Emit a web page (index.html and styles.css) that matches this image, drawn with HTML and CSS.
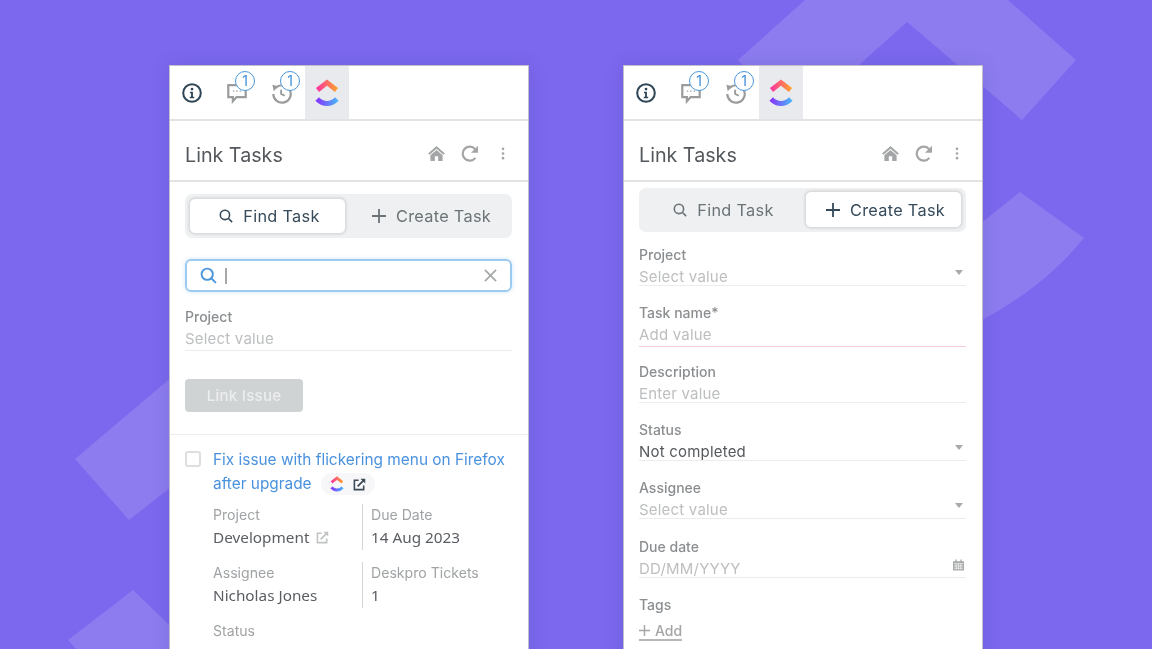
FILE: index.html
```html
<!DOCTYPE html>
<html lang="en">
<head>
    <meta charset="UTF-8">
    <meta name="viewport" content="width=device-width, initial-scale=1.0">
    <title>Link Tasks</title>
    <link rel="stylesheet" href="styles.css">
</head>
<body>
    <!-- Backdrop shapes -->
    <svg class="backdrop" width="1152" height="649" viewBox="0 0 1152 649">
        <path d="M738 60 805 0H1008L1076 60 1022 120 907 22 860 64 800 120 760 84Z"/>
        <path d="M1020 192 1084 238C1058 270 1020 302 970 326L960 240Z"/>
        <path d="M75 459 180 370V480L129 520Z"/>
        <path d="M68 640 133 590 190 645V649H76Z"/>
    </svg>

    <!-- Shared icons -->
    <svg class="sprite" width="0" height="0">
        <defs>
            <linearGradient id="logo-top" gradientUnits="userSpaceOnUse" x1="1" y1="0" x2="23" y2="0">
                <stop offset="0" stop-color="#fb2fa5"/>
                <stop offset="1" stop-color="#ffa62b"/>
            </linearGradient>
            <linearGradient id="logo-bottom" gradientUnits="userSpaceOnUse" x1="1" y1="0" x2="23" y2="0">
                <stop offset="0" stop-color="#8930fd"/>
                <stop offset="1" stop-color="#49b8f9"/>
            </linearGradient>
        </defs>
        <symbol id="i-logo" viewBox="0 0 24 28">
            <path d="M2.500 11 12 3.600 21.500 11" fill="none" stroke="url(#logo-top)" stroke-width="5"/>
            <path d="M2.200 20C8 26 16 26 21.800 20" fill="none" stroke="url(#logo-bottom)" stroke-width="5"/>
        </symbol>
        <symbol id="i-info" viewBox="0 0 24 24">
            <circle cx="12" cy="12" r="9.600" fill="none" stroke="currentColor" stroke-width="2.200"/>
            <circle cx="12" cy="7.700" r="1.500" fill="currentColor"/>
            <path d="M9.800 10.600H13V16H14.400V17.600H9.600V16H11V12.200H9.800Z" fill="currentColor"/>
        </symbol>
        <symbol id="i-chat" viewBox="0 0 24 24">
            <path d="M2.500 3.500H21.500V16.500H11.500L7.500 21V16.500H2.500Z" fill="none" stroke="currentColor" stroke-width="2.400"/>
            <path d="M7.500 10H9M11.200 10H12.700M14.900 10H16.400" stroke="currentColor" stroke-width="1.500"/>
        </symbol>
        <symbol id="i-history" viewBox="0 0 24 24">
            <path d="M5.300 6.300A9.500 9.500 0 1 1 2.500 13" fill="none" stroke="currentColor" stroke-width="2.400"/>
            <path d="M1.500 3 8 4.500 3 10Z" fill="currentColor"/>
            <path d="M11 8.500V13L15 15" fill="none" stroke="currentColor" stroke-width="2"/>
        </symbol>
        <symbol id="i-home" viewBox="0 0 18 16">
            <path d="M9 0 18 8 16.300 9.200 9 3 1.700 9.200 0 8Z" fill="currentColor"/>
            <path d="M9 4.300 15.500 9.800V16H10.800V11H7.200V16H2.500V9.800Z" fill="currentColor"/>
        </symbol>
        <symbol id="i-refresh" viewBox="0 0 18 18">
            <path d="M14.300 12.800A7 7 0 1 1 14.100 4.200" fill="none" stroke="currentColor" stroke-width="2.200"/>
            <path d="M17 .8V7.800H10Z" fill="currentColor"/>
        </symbol>
        <symbol id="i-dots" viewBox="0 0 4 14">
            <circle cx="2" cy="2" r="1.400" fill="currentColor"/>
            <circle cx="2" cy="7" r="1.400" fill="currentColor"/>
            <circle cx="2" cy="12" r="1.400" fill="currentColor"/>
        </symbol>
        <symbol id="i-search" viewBox="0 0 16 16">
            <circle cx="6.800" cy="6.800" r="5.300" fill="none" stroke="currentColor" stroke-width="1.800"/>
            <path d="M10.800 10.800 15 15" stroke="currentColor" stroke-width="1.800"/>
        </symbol>
        <symbol id="i-plus" viewBox="0 0 14 14">
            <path d="M7 0V14M0 7H14" stroke="currentColor" stroke-width="1.800"/>
        </symbol>
        <symbol id="i-close" viewBox="0 0 14 14">
            <path d="M1 1 13 13M13 1 1 13" stroke="currentColor" stroke-width="1.800"/>
        </symbol>
        <symbol id="i-external" viewBox="0 0 14 14">
            <path d="M6 2.500H1.500V12.500H11.500V8" fill="none" stroke="currentColor" stroke-width="1.700"/>
            <path d="M5 9 12 2" stroke="currentColor" stroke-width="1.900"/>
            <path d="M8 .8H13.200V6Z" fill="currentColor"/>
        </symbol>
        <symbol id="i-calendar" viewBox="0 0 12 12">
            <path d="M0 2H12V12H0ZM2.500 0H4V2H2.500ZM8 0H9.500V2H8Z" fill="currentColor"/>
            <path d="M1 4.500H11M1 7H11M1 9.500H11M3.500 4.500V11M6 4.500V11M8.500 4.500V11" stroke="#fff" stroke-width=".7"/>
        </symbol>
    </svg>

    <main class="stage">
        <!-- Find task panel -->
        <section class="panel">
            <nav class="nav-bar">
                <a class="nav-tab nav-tab-info"><svg class="icon-22"><use href="#i-info"/></svg></a>
                <a class="nav-tab"><svg class="icon-22"><use href="#i-chat"/></svg><span class="badge">1</span></a>
                <a class="nav-tab"><svg class="icon-22"><use href="#i-history"/></svg><span class="badge">1</span></a>
                <a class="nav-tab nav-tab-active"><svg class="logo"><use href="#i-logo"/></svg></a>
            </nav>
            <header class="title-bar">
                <h1>Link Tasks</h1>
                <div class="title-actions">
                    <svg class="action-home"><use href="#i-home"/></svg>
                    <svg class="action-refresh"><use href="#i-refresh"/></svg>
                    <svg class="action-dots"><use href="#i-dots"/></svg>
                </div>
            </header>
            <div class="content">
                <div class="tabs tabs-find">
                    <button class="tab tab-active"><svg class="icon-14"><use href="#i-search"/></svg>Find Task</button>
                    <button class="tab"><svg class="icon-14"><use href="#i-plus"/></svg>Create Task</button>
                </div>
                <div class="search-box">
                    <svg class="search-icon"><use href="#i-search"/></svg>
                    <span class="caret"></span>
                    <svg class="search-clear"><use href="#i-close"/></svg>
                </div>
                <div class="field field-tall">
                    <label>Project</label>
                    <div class="value placeholder">Select value</div>
                </div>
                <button class="link-button">Link Issue</button>
            </div>
            <div class="result">
                <span class="checkbox"></span>
                <div class="result-body">
                    <a class="result-title">Fix issue with flickering menu on Firefox after upgrade<span class="result-pill"><svg class="pill-logo"><use href="#i-logo"/></svg><svg class="pill-link"><use href="#i-external"/></svg></span></a>
                    <div class="meta-grid">
                        <div class="meta">
                            <div class="meta-label">Project</div>
                            <div class="meta-value">Development<svg class="meta-link"><use href="#i-external"/></svg></div>
                        </div>
                        <div class="meta meta-right">
                            <div class="meta-label">Due Date</div>
                            <div class="meta-value">14 Aug 2023</div>
                        </div>
                        <div class="meta">
                            <div class="meta-label">Assignee</div>
                            <div class="meta-value">Nicholas Jones</div>
                        </div>
                        <div class="meta meta-right">
                            <div class="meta-label">Deskpro Tickets</div>
                            <div class="meta-value">1</div>
                        </div>
                        <div class="meta">
                            <div class="meta-label">Status</div>
                        </div>
                    </div>
                </div>
            </div>
        </section>

        <!-- Create task panel -->
        <section class="panel">
            <nav class="nav-bar">
                <a class="nav-tab nav-tab-info"><svg class="icon-22"><use href="#i-info"/></svg></a>
                <a class="nav-tab"><svg class="icon-22"><use href="#i-chat"/></svg><span class="badge">1</span></a>
                <a class="nav-tab"><svg class="icon-22"><use href="#i-history"/></svg><span class="badge">1</span></a>
                <a class="nav-tab nav-tab-active"><svg class="logo"><use href="#i-logo"/></svg></a>
            </nav>
            <header class="title-bar">
                <h1>Link Tasks</h1>
                <div class="title-actions">
                    <svg class="action-home"><use href="#i-home"/></svg>
                    <svg class="action-refresh"><use href="#i-refresh"/></svg>
                    <svg class="action-dots"><use href="#i-dots"/></svg>
                </div>
            </header>
            <div class="content content-create">
                <div class="tabs tabs-create">
                    <button class="tab"><svg class="icon-14"><use href="#i-search"/></svg>Find Task</button>
                    <button class="tab tab-active"><svg class="icon-14"><use href="#i-plus"/></svg>Create Task</button>
                </div>
                <div class="form">
                    <div class="field">
                        <label>Project</label>
                        <div class="value placeholder">Select value<span class="arrow"></span></div>
                    </div>
                    <div class="field field-tall">
                        <label>Task name*</label>
                        <div class="value placeholder value-error">Add value</div>
                    </div>
                    <div class="field">
                        <label>Description</label>
                        <div class="value placeholder">Enter value</div>
                    </div>
                    <div class="field">
                        <label>Status</label>
                        <div class="value">Not completed<span class="arrow"></span></div>
                    </div>
                    <div class="field">
                        <label>Assignee</label>
                        <div class="value placeholder">Select value<span class="arrow"></span></div>
                    </div>
                    <div class="field">
                        <label>Due date</label>
                        <div class="value placeholder">DD/MM/YYYY<svg class="calendar"><use href="#i-calendar"/></svg></div>
                    </div>
                    <div class="field">
                        <label>Tags</label>
                        <a class="add-tag"><svg class="icon-10"><use href="#i-plus"/></svg>Add</a>
                    </div>
                </div>
            </div>
        </section>
    </main>
</body>
</html>
```

FILE: styles.css
```css
/* General Page Styling */
html, body {
    height: 100%;
}

body {
    background-color: #7b68ee;
    font-family: Inter, Arial, sans-serif;
    margin: 0;
    overflow: hidden;
    position: relative;
}

.backdrop {
    position: absolute;
    left: 0;
    top: 0;
    fill: #8c7cf0;
}

.sprite {
    position: absolute;
}

.stage {
    display: flex;
    filter: blur(0.35px);
    gap: 94px;
    height: 649px;
    justify-content: center;
    overflow: hidden;
    padding-top: 65px;
    box-sizing: border-box;
    position: relative;
}

/* Panels */
.panel {
    background-color: #ffffff;
    border: 1px solid #bfbfc9;
    box-shadow: 0 0 18px rgba(60, 50, 120, 0.14);
    box-sizing: border-box;
    flex: none;
    height: 640px;
    width: 360px;
}

.nav-bar {
    border-bottom: 2px solid #e3e3e3;
    box-sizing: border-box;
    display: flex;
    height: 55px;
}

.nav-tab {
    align-items: center;
    color: #999b9c;
    display: flex;
    justify-content: center;
    position: relative;
    width: 45px;
}

.nav-tab-info {
    color: #2f4656;
    width: 44px;
}

.nav-tab-active {
    background-color: #e9eaed;
    margin-left: 1px;
    width: 44px;
}

.icon-22 {
    height: 22px;
    width: 22px;
}

.logo {
    height: 28px;
    width: 24px;
}

.badge {
    background-color: #ffffff;
    border: 1.5px solid #4c97dc;
    border-radius: 50%;
    box-sizing: border-box;
    color: #3f8fd8;
    font-size: 14px;
    height: 20px;
    line-height: 17px;
    position: absolute;
    right: 4px;
    text-align: center;
    top: 5px;
    width: 20px;
}

.title-bar {
    align-items: center;
    border-bottom: 2px solid #e3e3e3;
    box-sizing: border-box;
    display: flex;
    height: 61px;
    justify-content: space-between;
    padding: 8px 23px 0 15px;
}

h1 {
    color: #54585c;
    font-size: 19.7px;
    font-weight: 400;
    margin: 0;
}

.title-actions {
    align-items: center;
    color: #a3a5a6;
    display: flex;
    margin-top: -2px;
}

.action-home {
    height: 15px;
    margin-right: 16px;
    width: 17px;
}

.action-refresh {
    height: 18px;
    margin-right: 22px;
    width: 18px;
}

.action-dots {
    height: 13px;
    width: 4px;
}

/* Tabs */
.content {
    padding: 12px 16px 0 15px;
}

.content-create {
    padding-top: 6px;
}

.tabs {
    background-color: #eef0f1;
    border-radius: 7px;
    box-sizing: border-box;
    display: flex;
    height: 44px;
    justify-content: space-between;
    padding: 4px;
}

.tabs-create {
    padding: 3px 4px 4px;
}

.tab {
    align-items: center;
    background: none;
    border: 1px solid transparent;
    border-radius: 6px;
    color: #6b7377;
    display: flex;
    font-family: inherit;
    font-size: 16.3px;
    gap: 10px;
    justify-content: center;
    letter-spacing: 0.3px;
    padding: 0 0 0 4px;
    width: 157px;
}

.tab-active {
    background-color: #ffffff;
    border-color: #dcdcdc;
    box-shadow: 0 0 3px rgba(0, 0, 0, 0.15);
    color: #354a5a;
}

.icon-14 {
    height: 14px;
    width: 14px;
}

/* Search */
.search-box {
    align-items: center;
    border: 2px solid #9ccbf1;
    border-radius: 6px;
    box-shadow: 0 0 4px rgba(156, 203, 241, 0.5);
    box-sizing: border-box;
    display: flex;
    height: 33px;
    margin: 21px 0 16px;
    padding: 0 13px;
}

.search-icon {
    color: #4c97dc;
    height: 17px;
    margin-right: 8px;
    width: 17px;
}

.caret {
    background-color: #a8a8a8;
    height: 16px;
    width: 1.5px;
}

.search-clear {
    color: #a5a7a8;
    height: 13px;
    margin-left: auto;
    width: 13px;
}

/* Fields */
.field {
    margin-bottom: 18.33px;
}

.field-tall {
    margin-bottom: 15.33px;
}

.field-tall .value {
    height: 25px;
}

label {
    color: #8b8e90;
    display: block;
    font-size: 14px;
    font-weight: 500;
    line-height: 18px;
}

.value {
    align-items: flex-start;
    border-bottom: 1px solid #ececec;
    box-sizing: border-box;
    color: #55595c;
    display: flex;
    font-size: 15px;
    height: 22px;
    justify-content: space-between;
    letter-spacing: 0.2px;
    line-height: 18px;
    padding-top: 4px;
}

.placeholder {
    color: #bcbec0;
}

.value-error {
    border-bottom-color: #f8ccd4;
}

.arrow {
    border-left: 4.5px solid transparent;
    border-right: 4.5px solid transparent;
    border-top: 5px solid #a8aaab;
    margin: 2px 3px 0 0;
}

.calendar {
    color: #a8aaab;
    height: 12px;
    margin: -1px 2px 0 0;
    width: 11px;
}

.form {
    margin-top: 14px;
}

.add-tag {
    align-items: center;
    border-bottom: 2px solid #b5b7b8;
    box-sizing: border-box;
    color: #a3a5a7;
    display: flex;
    font-size: 14px;
    font-weight: 500;
    gap: 5px;
    height: 18px;
    margin-top: 9px;
    width: fit-content;
}

.icon-10 {
    height: 11px;
    width: 11px;
}

.link-button {
    background-color: #d0d3d4;
    border: none;
    border-radius: 4px;
    color: #eceeee;
    display: block;
    font-family: inherit;
    font-size: 15px;
    font-weight: 500;
    height: 33px;
    letter-spacing: 0.3px;
    margin-top: 28px;
    width: 118px;
}

/* Result card */
.result {
    border-top: 1px solid #eeeeee;
    display: flex;
    gap: 12px;
    margin-top: 22px;
    padding: 16px 15px 0;
}

.checkbox {
    border: 2px solid #dedede;
    border-radius: 3px;
    box-sizing: border-box;
    flex: none;
    height: 16px;
    width: 16px;
}

.result-title {
    color: #4a92de;
    display: block;
    font-size: 15.4px;
    line-height: 23.5px;
    margin-top: -3px;
    width: 298px;
}

.result-pill {
    align-items: center;
    background-color: #f7f7fa;
    border-radius: 11px;
    display: inline-flex;
    gap: 9px;
    height: 22px;
    margin: -4px 0 -4px 9px;
    padding: 0 9px;
    vertical-align: middle;
}

.pill-logo {
    height: 16px;
    width: 14px;
}

.pill-link {
    color: #3c4a55;
    height: 13px;
    width: 13px;
}

.meta-grid {
    display: grid;
    grid-template-columns: 149px 1fr;
    margin-top: 9px;
}

.meta {
    height: 58px;
}

.meta-right {
    position: relative;
    padding-left: 9px;
}

.meta-right::before {
    background-color: #d4d4d4;
    content: "";
    height: 46px;
    left: 0;
    position: absolute;
    top: 0;
    width: 1px;
}

.meta-label {
    color: #a0a3a5;
    font-size: 14.1px;
    line-height: 20px;
    margin-top: 1px;
}

.meta-value {
    align-items: center;
    color: #5a5e62;
    display: flex;
    font-family: "Noto Sans", Arial, sans-serif;
    font-size: 15.3px;
    gap: 7px;
    line-height: 24px;
}

.meta-link {
    color: #c0c2c4;
    height: 13px;
    width: 13px;
}
```
